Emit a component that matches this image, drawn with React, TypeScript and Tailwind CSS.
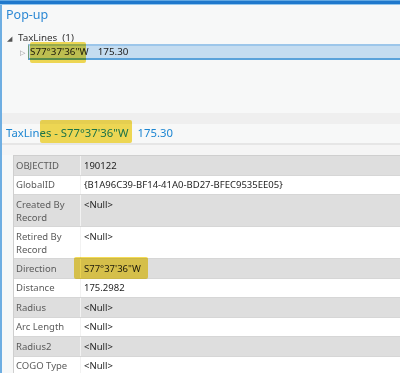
import React from "react";

type Row = { label: string; value: string; tall?: boolean; mark?: boolean };

const rows: Row[] = [
  { label: "OBJECTID", value: "190122" },
  { label: "GlobalID", value: "{B1A96C39-BF14-41A0-BD27-BFEC9535EE05}" },
  { label: "Created By Record", value: "<Null>", tall: true },
  { label: "Retired By Record", value: "<Null>", tall: true },
  { label: "Direction", value: "S77°37'36\"W", mark: true },
  { label: "Distance", value: "175.2982" },
  { label: "Radius", value: "<Null>" },
  { label: "Arc Length", value: "<Null>" },
  { label: "Radius2", value: "<Null>" },
  { label: "COGO Type", value: "<Null>" },
];

// yellow marker drawn over the text, like a screenshot annotation
function Marker({ className }: { className: string }) {
  return (
    <span
      className={`pointer-events-none absolute rounded-[2px] bg-[#f5dc55] mix-blend-multiply ${className}`}
    />
  );
}

export default function App() {
  return (
    <div className="w-[400px] h-[373px] overflow-hidden flex flex-col bg-[#f7f8f8] font-['Noto_Sans',sans-serif]">
      {/* top blue bar */}
      <div className="shrink-0 h-[1px] bg-[#62a8e2]" />
      <div className="shrink-0 h-[3px] bg-[#1f78cc]" />
      <div className="shrink-0 h-[1px] bg-[#94c6ec]" />

      <div className="flex flex-1 min-h-0">
        <div className="shrink-0 w-[2px] bg-[#6eaee2]" />
        <div className="flex-1 flex flex-col min-h-0">
          {/* tree */}
          <div className="shrink-0 h-[108px] flex flex-col">
            <div className="pl-[4px] h-[20px] text-[12.5px] leading-[20px] text-[#2b88d4]">
              Pop-up
            </div>
            <div className="h-[16px] mt-[5px] flex items-center text-[9.8px] text-[#333]">
              <span className="ml-[5px] w-[10px] text-[7px] text-[#555] leading-none">◢</span>
              <span className="ml-[1px]">TaxLines&nbsp;&nbsp;(1)</span>
            </div>
            <div className="flex items-center h-[16px] mt-[-2px]">
              <span className="ml-[18px] w-[8px] text-[7px] text-[#888] leading-none">▷</span>
              <div className="relative flex-1 h-[16px] flex items-center border-t-[2px] border-t-[#9cc6ea] border-b-[2px] border-b-[#5aa2da] border-l border-l-[#6d9c7a] bg-[#c4dcf0] text-[9.8px] text-[#222]">
                <span className="ml-[1px]">S77°37'36"W</span>
                <span className="ml-[9px]">175.30</span>
                <Marker className="left-[1px] top-[-4px] w-[56px] h-[21px]" />
              </div>
            </div>
          </div>

          {/* divider */}
          <div className="shrink-0 h-[11px] bg-[#efefef]" />

          {/* header */}
          <div className="shrink-0 h-[19px] flex items-center pl-[4px] text-[11.3px] text-[#1d86d2]">
            <span className="relative">
              TaxLines - S77°37'36"W
              <Marker className="left-[34px] top-[-5px] w-[92px] h-[23px]" />
            </span>
            <span className="ml-[9px]">175.30</span>
          </div>
          <div className="shrink-0 h-[2px] bg-[#e6e6e6]" />
          <div className="shrink-0 h-[10px] bg-[#f5f5f5]" />

          {/* attribute table */}
          <div className="shrink-0 ml-[11px] border-t border-l border-[#cfcfcf] text-[9.5px]">
            {rows.map((r, i) => (
              <div
                key={r.label}
                className={`grid grid-cols-[67px_1fr] border-b border-[#d6d6d6] ${
                  i % 2 === 0 ? "bg-[#dedede]" : "bg-white"
                } ${r.tall ? "h-[32px]" : "h-[19.5px]"}`}
              >
                <div
                  className={`pl-[2px] pr-[4px] border-r border-[#f2f2f2] text-[#5b5b5b] leading-[13px] ${
                    r.tall ? "pt-[3px]" : "flex items-center"
                  }`}
                >
                  {r.label}
                </div>
                <div
                  className={`pl-[3px] text-[#1e1e1e] leading-[13px] whitespace-nowrap ${
                    r.tall ? "pt-[3px]" : "flex items-center"
                  }`}
                >
                  <span className="relative">
                    {r.value}
                    {r.mark && <Marker className="left-[-10px] top-[-5px] w-[74px] h-[22px]" />}
                  </span>
                </div>
              </div>
            ))}
          </div>
        </div>
      </div>
    </div>
  );
}
